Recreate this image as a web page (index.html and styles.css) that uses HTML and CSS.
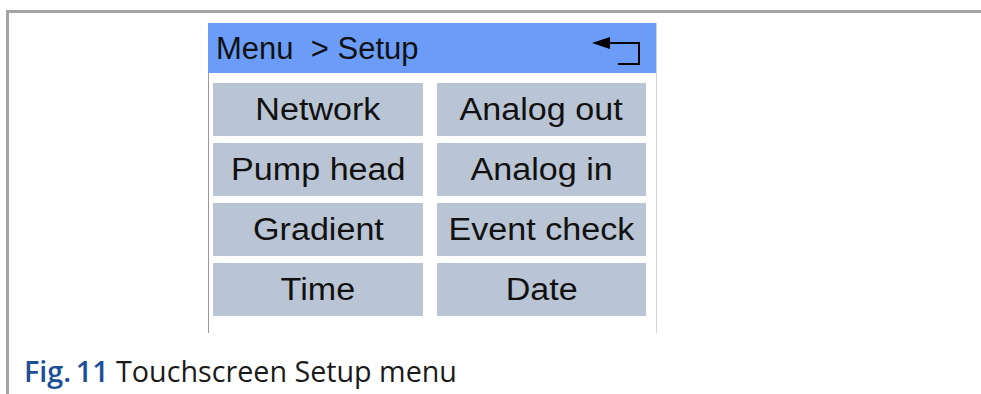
FILE: index.html
```html
<!DOCTYPE html>
<html lang="en">
<head>
  <meta charset="UTF-8" />
  <meta name="viewport" content="width=device-width, initial-scale=1.0"/>
  <title>Touchscreen Setup menu</title>
  <link rel="stylesheet" href="styles.css">
</head>
<body>

  <div class="frame">
    <div class="screen">
      <div class="screen-head">
        <span class="crumb">Menu&nbsp; &gt; Setup</span>
        <svg class="back" width="50" height="30" viewBox="0 0 50 30">
          <polygon points="0,8 18,2 18,14" fill="#000"/>
          <polyline points="15,8 47,8 47,29 26,29" fill="none" stroke="#000" stroke-width="2"/>
        </svg>
      </div>
      <div class="menu">
        <div class="item"><span>Network</span></div>
        <div class="item"><span>Analog out</span></div>
        <div class="item"><span>Pump head</span></div>
        <div class="item"><span>Analog in</span></div>
        <div class="item"><span>Gradient</span></div>
        <div class="item"><span>Event check</span></div>
        <div class="item"><span>Time</span></div>
        <div class="item"><span>Date</span></div>
      </div>
    </div>

    <p class="caption"><b>Fig.&thinsp;11</b> Touchscreen Setup menu</p>
  </div>

</body>
</html>
```

FILE: styles.css
```css
body { margin: 0; background: #fff; font-family: "Liberation Sans", Arial, sans-serif; }
.frame {
  margin: 10px 0 0 6px;
  border-top: 3px solid #a4a4a4;
  border-left: 3px solid #a4a4a4;
  height: 381px;
}
.screen {
  margin: 10px 0 0 199px;
  width: 447px;
  border-left: 1px solid #9a9a9a;
  border-right: 1px solid #d4d4d4;
}
.screen-head {
  height: 50px;
  background: #6a9cf8;
  display: flex;
  align-items: center;
  justify-content: space-between;
  padding: 0 14px 0 8px;
  margin-left: -1px;
}
.crumb { font-size: 31px; color: #111; padding-top: 2px; }
.back { margin-top: 4px; }
.menu {
  display: grid;
  grid-template-columns: 210px 209px;
  grid-auto-rows: 53px;
  column-gap: 14px;
  row-gap: 7px;
  padding: 10px 0 17px 4px;
}
.item {
  background: #b9c5d4;
  display: flex;
  align-items: center;
  justify-content: center;
  font-size: 31px;
  color: #111;
}
.item span { display: inline-block; transform: scaleX(1.1); white-space: nowrap; }
.caption {
  margin: 18px 0 0 15px;
  font-family: "Open Sans", Lato, sans-serif;
  font-size: 28.7px;
  color: #1a1a1a;
}
.caption b { color: #1d4f98; font-weight: 600; }
```
